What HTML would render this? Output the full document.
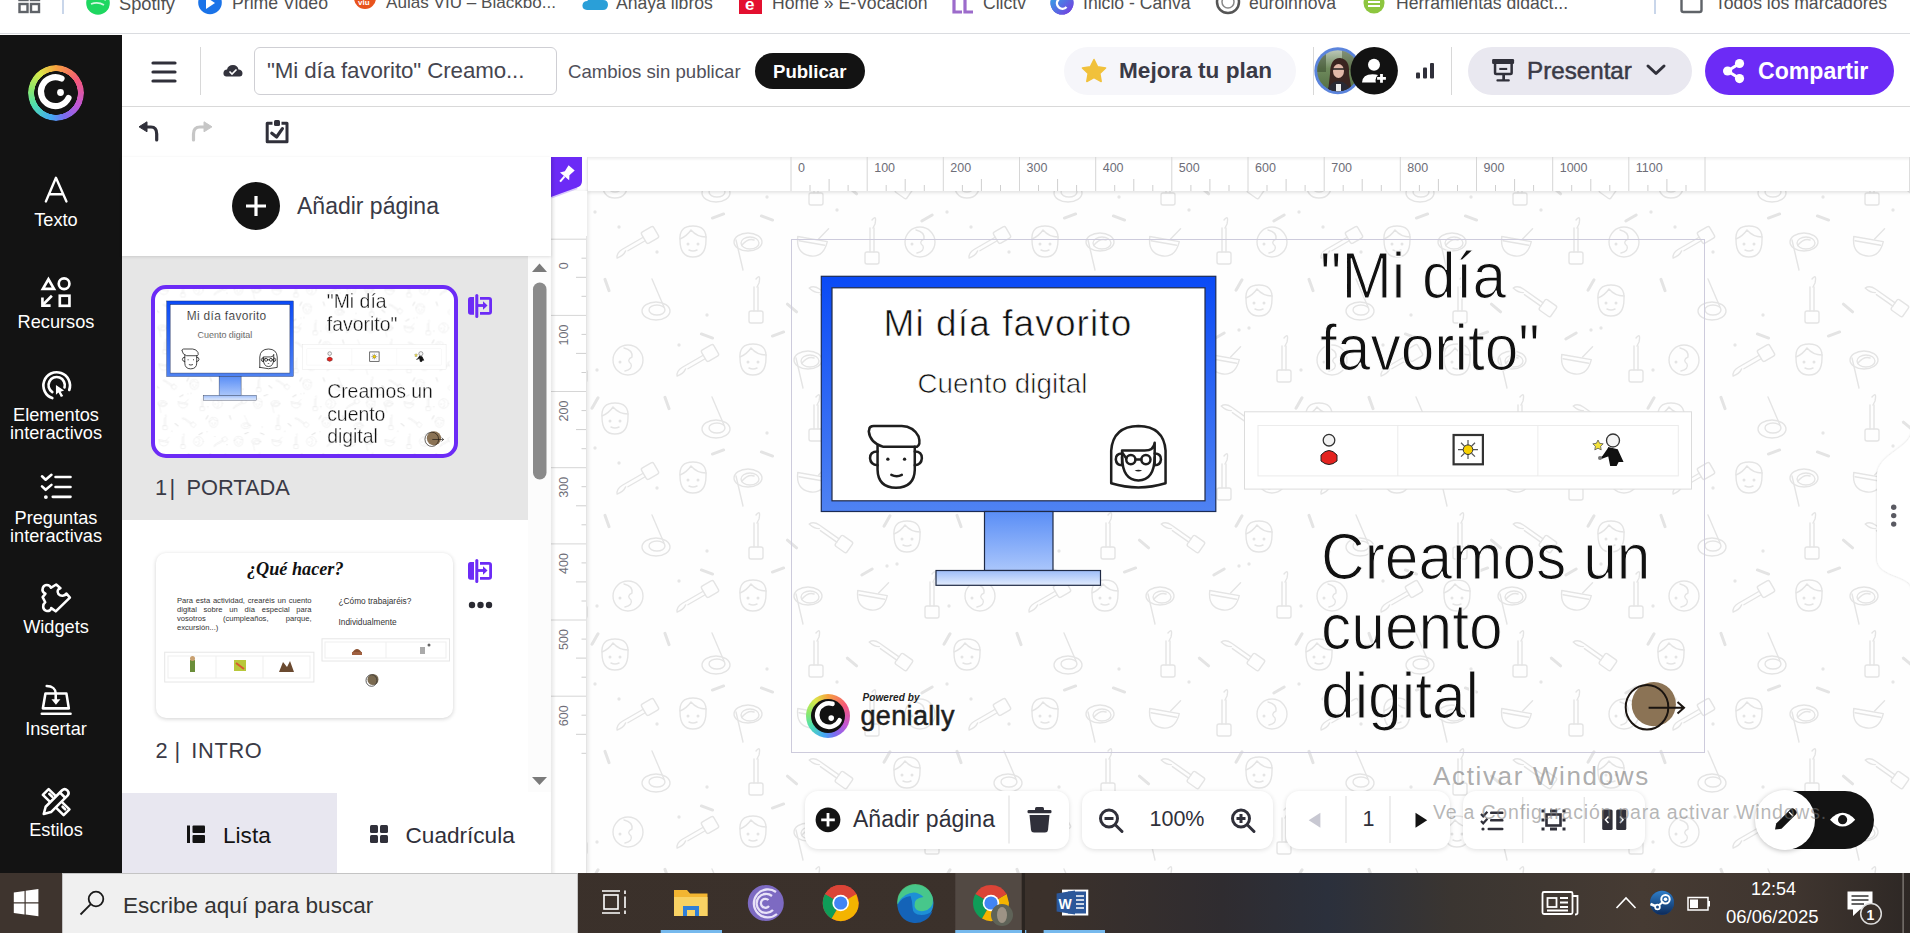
<!DOCTYPE html>
<html><head><meta charset="utf-8">
<style>
*{box-sizing:border-box;margin:0;padding:0}
html,body{width:1910px;height:933px;overflow:hidden;background:#fff;font-family:"Liberation Sans",sans-serif;color:#333}
.a{position:absolute}
#bm{left:0;top:0;width:1910px;height:34px;background:#fff;border-bottom:1px solid #dadce0;overflow:hidden}
#bm .t{position:absolute;top:-7px;font-size:17px;color:#505050;white-space:nowrap}
#side{left:0;top:35px;width:122px;height:838px;background:#131313}
#side .lbl{position:absolute;left:0;width:122px;text-align:center;color:#fff;font-size:17px;line-height:18px}
#hdr{left:122px;top:34px;width:1788px;height:73px;background:#fff;border-bottom:1px solid #d9d9d9}
#tb{left:122px;top:107px;width:1788px;height:50px;background:#fff}
#panel{left:122px;top:157px;width:429px;height:716px;background:#fff}
#canvas{left:551px;top:157px;width:1359px;height:716px;background:#fdfdfd}
#task{left:0;top:873px;width:1910px;height:60px}
</style></head><body>
<div id="bm" class="a">
<svg class="a" style="left:0;top:0" width="1910" height="34">
 <g fill="none" stroke="#5f6368" stroke-width="2.4">
  <rect x="19.5" y="-8" width="8" height="8"/><rect x="31" y="-8" width="8" height="8"/>
  <rect x="19.5" y="4" width="8" height="8"/><rect x="31" y="4" width="8" height="8"/>
 </g>
 <rect x="62" y="0" width="2" height="14" fill="#c9d6ea"/>
 <circle cx="98" cy="3" r="11.8" fill="#1ed760"/>
 <path d="M90 -1 q8 -3 16 1 M91 4 q7 -2.5 13 1" stroke="#fff" stroke-width="1.8" fill="none" opacity=".8"/>
 <circle cx="210" cy="2.5" r="11.8" fill="#1a73e8"/>
 <path d="M206 -3 L215 3 L206 9 Z" fill="#fff"/>
 <path d="M354 -2 a11 11 0 0 0 22 0 v-4 h-22 z" fill="#e8531d"/>
 <text x="358" y="5" font-size="8" font-weight="700" fill="#fff" font-family="Liberation Sans">viu</text>
 <path d="M587 10 q-5 0 -4.5 -5 q0.5 -4 5 -4 q1.5 -6 8 -6 q6 0 7.5 5 q5 0 5 5 q-0.5 5 -5 5 z" fill="#2a9fd8"/>
 <rect x="739" y="-8" width="23" height="22" fill="#e3102f"/>
 <text x="745" y="10" font-size="17" font-weight="700" fill="#fff" font-family="Liberation Sans">e</text>
 <path d="M954 -6 v18 h8 M965 -6 v18 h8" stroke="#9c6bcb" stroke-width="3.2" fill="none"/>
 <circle cx="1062" cy="3" r="11.5" fill="#5a4fd8"/>
 <circle cx="1062" cy="3" r="11.5" fill="url(#cv)"/>
 <path d="M1066 -1 a5.5 5.5 0 1 0 0.5 8" stroke="#fff" stroke-width="2.4" fill="none"/>
 <defs><linearGradient id="cv" x1="0" y1="0" x2="1" y2="1"><stop offset="0" stop-color="#28b4e6"/><stop offset="1" stop-color="#7b34e0"/></linearGradient></defs>
 <circle cx="1228" cy="2" r="11" fill="#fff" stroke="#555" stroke-width="2.5"/>
 <circle cx="1228" cy="2" r="6" fill="none" stroke="#888" stroke-width="1.5"/>
 <circle cx="1374" cy="3" r="10.5" fill="#8dc63f"/>
 <rect x="1368" y="1" width="12" height="2" fill="#fff"/><rect x="1368" y="5" width="12" height="2" fill="#fff"/>
 <rect x="1654" y="0" width="2" height="14" fill="#c9d6ea"/>
 <rect x="1681.5" y="-10" width="20" height="22" rx="2" fill="none" stroke="#5f6368" stroke-width="2.4"/>
</svg>
<span class="t" style="left:119px;font-size:18.3px">Spotify</span>
<span class="t" style="left:232px;font-size:17.7px">Prime Video</span>
<span class="t" style="left:386px;font-size:17.1px">Aulas VIU – Blackbo...</span>
<span class="t" style="left:616px;font-size:17.6px">Anaya libros</span>
<span class="t" style="left:772px;font-size:17.6px">Home » E-Vocación</span>
<span class="t" style="left:983px;font-size:17.6px">Clictv</span>
<span class="t" style="left:1083px;font-size:17.6px">Inicio - Canva</span>
<span class="t" style="left:1249px;font-size:17.6px">euroinnova</span>
<span class="t" style="left:1396px;font-size:17.6px">Herramientas didáct...</span>
<span class="t" style="left:1715px;font-size:17.6px">Todos los marcadores</span>
</div>
<div id="side" class="a"></div>
<svg class="a" style="left:0;top:0" width="122" height="873">
<g fill="none" stroke="#fff" stroke-linecap="round" stroke-linejoin="round">
 <g transform="translate(30,170) scale(0.04288)" stroke-width="55"><path d="M370 735 L605 180 L850 735 M455 565 L765 565"/></g>
 <g transform="translate(30,270) scale(0.04288)" stroke-width="62" stroke-linecap="butt" stroke-linejoin="miter">
  <path d="M430 215 L560 440 L300 440 Z"/><circle cx="795" cy="320" r="125"/><rect x="695" y="600" width="225" height="235"/>
  <path d="M510 600 L300 810"/><path d="M290 640 L290 830 L480 830"/></g>
 <g transform="translate(30,364) scale(0.04288)" stroke-width="62">
  <path d="M520 795 A310 310 0 1 1 915 605"/><path d="M520 655 A190 190 0 1 1 805 545"/></g>
 <g transform="translate(30,364) scale(0.04288)" fill="#fff" stroke="none"><path d="M605 490 L795 620 L715 645 L775 745 L720 770 L665 665 L605 715 Z"/></g>
 <g transform="translate(30,466) scale(0.04288)" stroke-width="60">
  <path d="M280 240 L365 320 L500 205 M280 475 L365 555 L500 440 M595 255 L945 255 M595 490 L945 490 M530 720 L945 720"/></g>
 <g transform="translate(30,466) scale(0.04288)" fill="#fff" stroke="none"><circle cx="370" cy="725" r="45"/></g>
 <g transform="translate(30,577) scale(0.04288)" stroke-width="60">
  <path d="M490 250 C455 170 330 165 300 250 C275 320 320 370 360 390 L295 470 L355 590 C290 640 285 760 380 790 C450 810 490 760 495 725 L600 800 L930 480 L850 385 C815 445 720 460 665 400 C620 340 650 275 710 260 L610 175 Z"/></g>
 <g transform="translate(30,679) scale(0.04288)" stroke-width="60">
  <path d="M360 340 L850 340 L905 685 L300 685 Z"/><path d="M275 810 L945 810"/><path d="M390 165 C520 165 600 240 600 340 L600 500"/></g>
 <g transform="translate(30,679) scale(0.04288)" fill="#fff" stroke="none"><path d="M500 470 L710 470 L605 600 Z"/></g>
 <g transform="translate(30,781) scale(0.04288)" stroke-width="60">
  <path d="M300 325 L435 190 L920 660 L785 795 Z"/>
  <path d="M450 300 L520 370 M760 600 L820 660"/>
 </g>
 <g transform="translate(30,781) scale(0.04288)" stroke-width="60" fill="#131313">
  <path d="M320 770 L365 600 L750 215 Q810 160 870 220 Q930 280 875 340 L490 725 Z"/>
  <path d="M700 270 L815 385"/>
 </g>
</g>
</svg>
<div class="a" style="left:0;top:212px;width:112px;text-align:center;color:#fff;font-size:18.2px;line-height:17.5px">Texto</div>
<div class="a" style="left:0;top:314px;width:112px;text-align:center;color:#fff;font-size:18.2px;line-height:17.5px">Recursos</div>
<div class="a" style="left:0;top:407px;width:112px;text-align:center;color:#fff;font-size:18.2px;line-height:17.5px">Elementos<br>interactivos</div>
<div class="a" style="left:0;top:510px;width:112px;text-align:center;color:#fff;font-size:18.2px;line-height:17.5px">Preguntas<br>interactivas</div>
<div class="a" style="left:0;top:619px;width:112px;text-align:center;color:#fff;font-size:18.2px;line-height:17.5px">Widgets</div>
<div class="a" style="left:0;top:721px;width:112px;text-align:center;color:#fff;font-size:18.2px;line-height:17.5px">Insertar</div>
<div class="a" style="left:0;top:822px;width:112px;text-align:center;color:#fff;font-size:18.2px;line-height:17.5px">Estilos</div>

<div id="hdr" class="a"></div>
<div class="a" style="left:28px;top:64.5px;width:56px;height:56px;border-radius:50%;background:conic-gradient(from 0deg,#f6a23e,#f4577a 60deg,#c057d8 120deg,#7a6cf0 160deg,#45a6f5 190deg,#4ee0b0 240deg,#8ee86a 280deg,#d9e84a 320deg,#f6a23e);-webkit-mask:radial-gradient(circle,transparent 21.5px,#000 22px,#000 28px,transparent 28.5px)"></div>
<svg class="a" style="left:28px;top:64.5px" width="56" height="56">
 <path d="M33.5 13.5 A14.5 14.5 0 1 0 40.5 33" fill="none" stroke="#fff" stroke-width="6.2" stroke-linecap="round"/>
 <circle cx="32.5" cy="27.5" r="3.4" fill="#fff"/>
</svg>


<div class="a" style="left:254px;top:47px;width:303px;height:48px;border:1px solid #cfcfd4;border-radius:6px"></div>
<div class="a" style="left:267px;top:58px;font-size:22.3px;color:#45454f;white-space:nowrap;letter-spacing:-0.1px">"Mi día favorito" Creamo...</div>
<div class="a" style="left:568px;top:61px;font-size:18.6px;color:#50505a;white-space:nowrap">Cambios sin publicar</div>
<div class="a" style="left:755px;top:53px;width:110px;height:36px;border-radius:18px;background:#131313"></div>
<div class="a" style="left:773px;top:61px;font-size:18.6px;font-weight:700;color:#fff;white-space:nowrap">Publicar</div>
<div class="a" style="left:1064px;top:47px;width:232px;height:48px;border-radius:24px;background:#f6f6fa"></div>
<div class="a" style="left:1119px;top:58px;font-size:22.6px;font-weight:700;color:#3a3a46;white-space:nowrap">Mejora tu plan</div>
<div class="a" style="left:1468px;top:47px;width:224px;height:48px;border-radius:24px;background:#e9e8f0"></div>
<div class="a" style="left:1527px;top:57px;font-size:24.2px;color:#3a3a46;white-space:nowrap;-webkit-text-stroke:0.5px #3a3a46">Presentar</div>
<div class="a" style="left:1705px;top:47px;width:189px;height:48px;border-radius:24px;background:#6c2bf6"></div>
<div class="a" style="left:1758px;top:58px;font-size:23.1px;font-weight:700;color:#fff;white-space:nowrap">Compartir</div>
<svg class="a" style="left:0;top:34px" width="1910" height="73">
 <!-- hamburger -->
 <g stroke="#30303a" stroke-width="3.2" stroke-linecap="round"><path d="M153 29h22M153 38h22M153 47h22"/></g>
 <rect x="200" y="13" width="1" height="48" fill="#d8d8d8"/>
 <!-- cloud -->
 <path d="M226 42.5 q-3 -0.5 -2.5 -4 q0.5 -3 3.5 -3 q1 -4.5 6 -4.5 q4.5 0 5.5 4.5 q3.5 0 4 3.5 q0 3.5 -3 3.5 z" fill="#33333d"/>
 <path d="M229.5 37.5 l2.5 2.5 l4.5 -4.5" stroke="#fff" stroke-width="1.6" fill="none"/>
 <!-- star -->
 <path d="M1094 25.5 l3.6 7.3 8 1.1 -5.8 5.6 1.4 8 -7.2 -3.8 -7.2 3.8 1.4 -8 -5.8 -5.6 8 -1.1z" fill="#f1c13b" stroke="#f1c13b" stroke-width="1.5" stroke-linejoin="round"/>
 <rect x="1313" y="13" width="1" height="48" fill="#d8d8d8"/>
 <rect x="1451" y="13" width="1" height="48" fill="#d8d8d8"/>
 <!-- avatar -->
 <defs><clipPath id="av"><circle cx="1337.8" cy="36.75" r="20.6"/></clipPath>
 <linearGradient id="avg" x1="0" y1="0" x2="0" y2="1"><stop offset="0" stop-color="#c9d2c8"/><stop offset=".45" stop-color="#6f8a5c"/><stop offset="1" stop-color="#4e6a40"/></linearGradient></defs>
 <circle cx="1337.8" cy="36.75" r="23.5" fill="#5b84dc"/>
 <g clip-path="url(#av)">
  <rect x="1314" y="13" width="48" height="48" fill="url(#avg)"/>
  <rect x="1316" y="16" width="10" height="22" fill="#3b4a30" opacity=".55"/>
  <rect x="1342" y="16" width="14" height="20" fill="#4a5a3a" opacity=".5"/>
  <path d="M1330 40 Q1330 24 1340 24 Q1350 25 1349 40 L1352 58 H1328 Z" fill="#3a2420"/>
  <ellipse cx="1338.5" cy="37" rx="5.5" ry="7" fill="#e2b8a8"/>
  <path d="M1333 35 H1344" stroke="#222" stroke-width="1.3"/>
  <path d="M1326 62 Q1328 48 1338 47 Q1350 48 1352 62 Z" fill="#2a2a34"/>
  <rect x="1336" y="50" width="5" height="12" fill="#eee"/>
 </g>
 <circle cx="1374.2" cy="36.75" r="23.7" fill="#121212"/>
 <circle cx="1374" cy="30.8" r="6" fill="#fff"/>
 <path d="M1362 48.5 Q1362.5 40.2 1372.5 40.2 Q1376 40.2 1378 41 Q1375.5 43.2 1375.5 46 Q1375.5 47.5 1376 48.5 Z" fill="#fff"/>
 <path d="M1381.5 40 V48.8 M1377.1 44.4 H1385.9" stroke="#fff" stroke-width="2.8"/>
 <!-- signal -->
 <rect x="1416" y="38.5" width="4" height="6" rx="1" fill="#30303a"/>
 <rect x="1423" y="33.5" width="4" height="11" rx="1" fill="#30303a"/>
 <rect x="1430" y="29" width="4" height="15.5" rx="1" fill="#30303a"/>
 <!-- presentar icon -->
 <g fill="#30303a"><rect x="1492.1" y="25.1" width="22" height="4.9" rx="1.2"/><path d="M1493.8 29.5 H1512.9 V38.7 Q1512.9 41.2 1510.4 41.2 H1496.3 Q1493.8 41.2 1493.8 38.7 Z M1496.3 29.5 V38.7 H1510.4 V29.5 Z" fill-rule="evenodd"/><rect x="1499.3" y="33.9" width="7.9" height="2.1"/><rect x="1502.3" y="41" width="2.7" height="5"/><rect x="1496.4" y="45.3" width="13.4" height="2.2" rx="1"/></g>
 <path d="M1648 32 l8 7.5 l8 -7.5" stroke="#30303a" stroke-width="3" fill="none" stroke-linecap="round" stroke-linejoin="round"/>
 <!-- share -->
 <g fill="#fff"><circle cx="1739.5" cy="29.5" r="4.6"/><circle cx="1727.6" cy="37" r="4.6"/><circle cx="1739.5" cy="44.6" r="4.6"/></g>
 <path d="M1739.5 29.5 L1727.6 37 L1739.5 44.6" stroke="#fff" stroke-width="3" fill="none"/>
</svg>

<div id="tb" class="a"></div>
<svg class="a" style="left:122px;top:107px" width="200" height="50">
 <g transform="translate(-122,-107)">
 <path d="M146 127 L151 127 Q156.7 127 156.7 134 L156.7 140" stroke="#30303a" stroke-width="3.2" fill="none" stroke-linecap="round"/>
 <path d="M139 126.8 L147 121.8 L147 131.8 Z" fill="#30303a" stroke="#30303a" stroke-width="1" stroke-linejoin="round"/>
 <path d="M205 127 L200 127 Q193.5 127 193.5 134 L193.5 140" stroke="#c6c6c6" stroke-width="3.2" fill="none" stroke-linecap="round"/>
 <path d="M212 126.8 L204 121.8 L204 131.8 Z" fill="#c6c6c6" stroke="#c6c6c6" stroke-width="1" stroke-linejoin="round"/>
 <path d="M272.5 123.2 L267.2 123.2 L267.2 141.8 L287 141.8 L287 123.2 L281.5 123.2" stroke="#30303a" stroke-width="3" fill="none" stroke-linejoin="round"/>
 <rect x="274" y="120" width="6" height="6" rx="1.5" fill="#30303a"/>
 <path d="M271.8 133.3 L276.6 137 L282.4 128.6" stroke="#30303a" stroke-width="3.2" fill="none" stroke-linecap="round" stroke-linejoin="round"/>
 </g>
</svg>

<div id="panel" class="a">
 <div class="a" style="left:0;top:0;width:429px;height:99px;background:#fff;box-shadow:0 1px 3px rgba(0,0,0,.12);z-index:2"></div>
 <div class="a" style="left:110px;top:25px;width:48px;height:48px;border-radius:50%;background:#131313;z-index:3"></div>
 <svg class="a" style="left:110px;top:25px;z-index:3" width="48" height="48"><path d="M24 14 V34 M14 24 H34" stroke="#fff" stroke-width="3.2"/></svg>
 <div class="a" style="left:175px;top:36px;font-size:23px;color:#3a3a46;white-space:nowrap;z-index:3">Añadir página</div>
 <div class="a" style="left:0;top:99px;width:406px;height:264px;background:#e6e6e6"></div>
 <div class="a" style="left:406px;top:99px;width:23px;height:536px;background:#fcfcfc"></div>
 <svg class="a" style="left:406px;top:99px" width="23" height="536">
  <path d="M4 16 L11.5 7.5 L19 16 Z" fill="#7a7a7a"/>
  <rect x="5" y="26.5" width="13.5" height="197" rx="6.75" fill="#8a8a8a"/>
  <path d="M4 521 L11.5 529 L19 521 Z" fill="#7a7a7a"/>
 </svg>
 <div class="a" style="left:28.5px;top:127.8px;width:307.5px;height:173px;border:4px solid #6c2bf6;border-radius:15px;background:#fff;overflow:hidden"><div class="a" style="left:2.9px;top:0;width:914px;height:514px;transform:scale(0.321);transform-origin:0 0"><svg class="a" style="left:0;top:0" width="914" height="514"><defs><pattern id="ddt" patternUnits="userSpaceOnUse" x="-204" y="-79" width="352" height="236"><g fill="none" stroke="#e4e4e4" stroke-width="1.4" stroke-linecap="round" stroke-linejoin="round"><g transform="translate(52 82) rotate(-30) scale(1)"><rect x="6" y="-7" width="14" height="13" rx="2"/><path d="M6 -2 H-18 Q-25 -2 -27 3 Q-20 4 -16 1"/><path d="M6 2 H-14"/></g>
<g transform="translate(106 82) scale(1)"><path d="M-13 -2 Q-14 -16 0 -16 Q14 -16 13 -2 Q13 15 0 15 Q-13 15 -13 -2 Z"/><path d="M-13 -3 Q-6 -6 -2 -12 Q4 -5 13 -5"/><circle cx="-5" cy="2" r="0.8"/><circle cx="5" cy="2" r="0.8"/><path d="M-4 8 Q0 10 4 8"/></g>
<g transform="translate(161 82) scale(1)"><ellipse rx="14" ry="9"/><ellipse cx="2" cy="1" rx="9" ry="6"/><path d="M-6 3 Q0 -4 6 -2"/><path d="M-12 -2 L-5 28"/></g>
<g transform="translate(225 82) rotate(10) scale(1)"><path d="M-15 -3 H15 Q14 14 0 14 Q-14 14 -15 -3 Z"/><path d="M-13 1 H13"/><path d="M6 -4 L14 -16"/></g>
<g transform="translate(285 82) rotate(0) scale(1)"><path d="M0 -22 Q5 -28 3 -18 L1 -14"/><path d="M-2 -14 L-2 10 M2 -14 L2 10"/><rect x="-7" y="10" width="14" height="12" rx="2"/></g>
<g transform="translate(-19 82) scale(1)"><circle r="15"/><path d="M-4 -12 Q5 -10 4 -3 Q-2 0 3 4 Q5 9 -3 11"/><circle cx="-8" cy="2" r="0.8"/></g>
<g transform="translate(333 82) scale(1)"><circle r="15"/><path d="M-4 -12 Q5 -10 4 -3 Q-2 0 3 4 Q5 9 -3 11"/><circle cx="-8" cy="2" r="0.8"/></g>
<g transform="translate(69 141) scale(1)"><ellipse cx="0" cy="10" rx="14" ry="9"/><ellipse cx="1" cy="9" rx="8" ry="5"/><path d="M8 6 L-4 -22"/></g>
<g transform="translate(169 141) rotate(0) scale(1)"><path d="M0 -22 Q5 -28 3 -18 L1 -14"/><path d="M-2 -14 L-2 10 M2 -14 L2 10"/><rect x="-7" y="10" width="14" height="12" rx="2"/></g>
<g transform="translate(246 141) rotate(35) scale(1)"><rect x="6" y="-7" width="14" height="13" rx="2"/><path d="M6 -2 H-18 Q-25 -2 -27 3 Q-20 4 -16 1"/><path d="M6 2 H-14"/></g>
<g transform="translate(-32 141) scale(1)"><path d="M-13 -2 Q-14 -16 0 -16 Q14 -16 13 -2 Q13 15 0 15 Q-13 15 -13 -2 Z"/><path d="M-13 -3 Q-6 -6 -2 -12 Q4 -5 13 -5"/><circle cx="-5" cy="2" r="0.8"/><circle cx="5" cy="2" r="0.8"/><path d="M-4 8 Q0 10 4 8"/></g>
<g transform="translate(320 141) scale(1)"><path d="M-13 -2 Q-14 -16 0 -16 Q14 -16 13 -2 Q13 15 0 15 Q-13 15 -13 -2 Z"/><path d="M-13 -3 Q-6 -6 -2 -12 Q4 -5 13 -5"/><circle cx="-5" cy="2" r="0.8"/><circle cx="5" cy="2" r="0.8"/><path d="M-4 8 Q0 10 4 8"/></g>
<path transform="translate(131 56) rotate(-20)" d="M-6 0 H6" stroke-width="3" stroke-linecap="round"/>
<path transform="translate(20 125) rotate(70)" d="M-6 0 H6" stroke-width="3" stroke-linecap="round"/>
<path transform="translate(372 125) rotate(70)" d="M-6 0 H6" stroke-width="3" stroke-linecap="round"/>
<path transform="translate(300 125) rotate(-60)" d="M-6 0 H6" stroke-width="3" stroke-linecap="round"/>
<path transform="translate(205 148) rotate(40)" d="M-6 0 H6" stroke-width="3" stroke-linecap="round"/>
<path transform="translate(120 176) rotate(20)" d="M-6 0 H6" stroke-width="3" stroke-linecap="round"/>
<path transform="translate(280 176) rotate(-30)" d="M-6 0 H6" stroke-width="3" stroke-linecap="round"/>
<circle cx="32" cy="67" r="1.7" fill="#e6e6e6" stroke="none"/>
<circle cx="384" cy="67" r="1.7" fill="#e6e6e6" stroke="none"/>
<circle cx="250" cy="50" r="1.7" fill="#e6e6e6" stroke="none"/>
<circle cx="120" cy="155" r="1.7" fill="#e6e6e6" stroke="none"/>
<circle cx="300" cy="170" r="1.7" fill="#e6e6e6" stroke="none"/>
<circle cx="10" cy="-26" r="1.7" fill="#e6e6e6" stroke="none"/>
<circle cx="10" cy="210" r="1.7" fill="#e6e6e6" stroke="none"/>
<circle cx="362" cy="-26" r="1.7" fill="#e6e6e6" stroke="none"/>
<circle cx="362" cy="210" r="1.7" fill="#e6e6e6" stroke="none"/>
<g transform="translate(112 200) rotate(-30) scale(1)"><rect x="6" y="-7" width="14" height="13" rx="2"/><path d="M6 -2 H-18 Q-25 -2 -27 3 Q-20 4 -16 1"/><path d="M6 2 H-14"/></g>
<g transform="translate(166 200) scale(1)"><path d="M-13 -2 Q-14 -16 0 -16 Q14 -16 13 -2 Q13 15 0 15 Q-13 15 -13 -2 Z"/><path d="M-13 -3 Q-6 -6 -2 -12 Q4 -5 13 -5"/><circle cx="-5" cy="2" r="0.8"/><circle cx="5" cy="2" r="0.8"/><path d="M-4 8 Q0 10 4 8"/></g>
<g transform="translate(221 200) scale(1)"><ellipse rx="14" ry="9"/><ellipse cx="2" cy="1" rx="9" ry="6"/><path d="M-6 3 Q0 -4 6 -2"/><path d="M-12 -2 L-5 28"/></g>
<g transform="translate(285 200) rotate(10) scale(1)"><path d="M-15 -3 H15 Q14 14 0 14 Q-14 14 -15 -3 Z"/><path d="M-13 1 H13"/><path d="M6 -4 L14 -16"/></g>
<g transform="translate(-7 200) rotate(0) scale(1)"><path d="M0 -22 Q5 -28 3 -18 L1 -14"/><path d="M-2 -14 L-2 10 M2 -14 L2 10"/><rect x="-7" y="10" width="14" height="12" rx="2"/></g>
<g transform="translate(345 200) rotate(0) scale(1)"><path d="M0 -22 Q5 -28 3 -18 L1 -14"/><path d="M-2 -14 L-2 10 M2 -14 L2 10"/><rect x="-7" y="10" width="14" height="12" rx="2"/></g>
<g transform="translate(41 200) scale(1)"><circle r="15"/><path d="M-4 -12 Q5 -10 4 -3 Q-2 0 3 4 Q5 9 -3 11"/><circle cx="-8" cy="2" r="0.8"/></g>
<g transform="translate(129 23) scale(1)"><ellipse cx="0" cy="10" rx="14" ry="9"/><ellipse cx="1" cy="9" rx="8" ry="5"/><path d="M8 6 L-4 -22"/></g>
<g transform="translate(129 259) scale(1)"><ellipse cx="0" cy="10" rx="14" ry="9"/><ellipse cx="1" cy="9" rx="8" ry="5"/><path d="M8 6 L-4 -22"/></g>
<g transform="translate(229 23) rotate(0) scale(1)"><path d="M0 -22 Q5 -28 3 -18 L1 -14"/><path d="M-2 -14 L-2 10 M2 -14 L2 10"/><rect x="-7" y="10" width="14" height="12" rx="2"/></g>
<g transform="translate(229 259) rotate(0) scale(1)"><path d="M0 -22 Q5 -28 3 -18 L1 -14"/><path d="M-2 -14 L-2 10 M2 -14 L2 10"/><rect x="-7" y="10" width="14" height="12" rx="2"/></g>
<g transform="translate(306 23) rotate(35) scale(1)"><rect x="6" y="-7" width="14" height="13" rx="2"/><path d="M6 -2 H-18 Q-25 -2 -27 3 Q-20 4 -16 1"/><path d="M6 2 H-14"/></g>
<g transform="translate(306 259) rotate(35) scale(1)"><rect x="6" y="-7" width="14" height="13" rx="2"/><path d="M6 -2 H-18 Q-25 -2 -27 3 Q-20 4 -16 1"/><path d="M6 2 H-14"/></g>
<g transform="translate(28 23) scale(1)"><path d="M-13 -2 Q-14 -16 0 -16 Q14 -16 13 -2 Q13 15 0 15 Q-13 15 -13 -2 Z"/><path d="M-13 -3 Q-6 -6 -2 -12 Q4 -5 13 -5"/><circle cx="-5" cy="2" r="0.8"/><circle cx="5" cy="2" r="0.8"/><path d="M-4 8 Q0 10 4 8"/></g>
<g transform="translate(28 259) scale(1)"><path d="M-13 -2 Q-14 -16 0 -16 Q14 -16 13 -2 Q13 15 0 15 Q-13 15 -13 -2 Z"/><path d="M-13 -3 Q-6 -6 -2 -12 Q4 -5 13 -5"/><circle cx="-5" cy="2" r="0.8"/><circle cx="5" cy="2" r="0.8"/><path d="M-4 8 Q0 10 4 8"/></g>
<g transform="translate(380 23) scale(1)"><path d="M-13 -2 Q-14 -16 0 -16 Q14 -16 13 -2 Q13 15 0 15 Q-13 15 -13 -2 Z"/><path d="M-13 -3 Q-6 -6 -2 -12 Q4 -5 13 -5"/><circle cx="-5" cy="2" r="0.8"/><circle cx="5" cy="2" r="0.8"/><path d="M-4 8 Q0 10 4 8"/></g>
<g transform="translate(380 259) scale(1)"><path d="M-13 -2 Q-14 -16 0 -16 Q14 -16 13 -2 Q13 15 0 15 Q-13 15 -13 -2 Z"/><path d="M-13 -3 Q-6 -6 -2 -12 Q4 -5 13 -5"/><circle cx="-5" cy="2" r="0.8"/><circle cx="5" cy="2" r="0.8"/><path d="M-4 8 Q0 10 4 8"/></g>
<path transform="translate(191 174) rotate(-20)" d="M-6 0 H6" stroke-width="3" stroke-linecap="round"/>
<path transform="translate(80 7) rotate(70)" d="M-6 0 H6" stroke-width="3" stroke-linecap="round"/>
<path transform="translate(80 243) rotate(70)" d="M-6 0 H6" stroke-width="3" stroke-linecap="round"/>
<path transform="translate(8 7) rotate(-60)" d="M-6 0 H6" stroke-width="3" stroke-linecap="round"/>
<path transform="translate(8 243) rotate(-60)" d="M-6 0 H6" stroke-width="3" stroke-linecap="round"/>
<path transform="translate(360 7) rotate(-60)" d="M-6 0 H6" stroke-width="3" stroke-linecap="round"/>
<path transform="translate(360 243) rotate(-60)" d="M-6 0 H6" stroke-width="3" stroke-linecap="round"/>
<path transform="translate(265 30) rotate(40)" d="M-6 0 H6" stroke-width="3" stroke-linecap="round"/>
<path transform="translate(265 266) rotate(40)" d="M-6 0 H6" stroke-width="3" stroke-linecap="round"/>
<path transform="translate(180 58) rotate(20)" d="M-6 0 H6" stroke-width="3" stroke-linecap="round"/>
<path transform="translate(-12 58) rotate(-30)" d="M-6 0 H6" stroke-width="3" stroke-linecap="round"/>
<path transform="translate(340 58) rotate(-30)" d="M-6 0 H6" stroke-width="3" stroke-linecap="round"/>
<circle cx="92" cy="185" r="1.7" fill="#e6e6e6" stroke="none"/>
<circle cx="310" cy="168" r="1.7" fill="#e6e6e6" stroke="none"/>
<circle cx="180" cy="37" r="1.7" fill="#e6e6e6" stroke="none"/>
<circle cx="8" cy="52" r="1.7" fill="#e6e6e6" stroke="none"/>
<circle cx="360" cy="52" r="1.7" fill="#e6e6e6" stroke="none"/>
<circle cx="70" cy="92" r="1.7" fill="#e6e6e6" stroke="none"/></g></pattern></defs><rect width="914" height="514" fill="url(#ddt)"/></svg>
 <svg class="a" style="left:0;top:0" width="914" height="514">
  <defs>
   <linearGradient id="mft" x1="0" y1="0" x2="0" y2="1"><stop offset="0" stop-color="#0a4af6"/><stop offset="1" stop-color="#4f82f2"/></linearGradient>
   <linearGradient id="mnt" x1="0" y1="0" x2="0" y2="1"><stop offset="0" stop-color="#5a8ef6"/><stop offset="1" stop-color="#aac6fb"/></linearGradient>
   <linearGradient id="mbt" x1="0" y1="0" x2="0" y2="1"><stop offset="0" stop-color="#9dbcf8"/><stop offset="1" stop-color="#e2ecfd"/></linearGradient>
  </defs>
  <rect x="30.3" y="37.3" width="394.5" height="235.2" fill="url(#mft)" stroke="#1b2b55" stroke-width="1.2"/>
  <rect x="41" y="48.8" width="373" height="213" fill="#fff" stroke="#222a44" stroke-width="1.2"/>
  <rect x="193.5" y="272.5" width="68.5" height="59" fill="url(#mnt)" stroke="#1f2a45" stroke-width="1.2"/>
  <rect x="145" y="331.5" width="164.5" height="14.8" fill="url(#mbt)" stroke="#1f2a45" stroke-width="1.2"/>
  <g transform="translate(69,179) scale(0.08363)" fill="none" stroke="#1e1e1e" stroke-width="30" stroke-linecap="round" stroke-linejoin="round">
   <path d="M110 140 Q110 95 165 95 L500 95 Q640 100 700 220 Q730 320 680 345 L280 345 Q120 300 105 160 Z"/>
   <path d="M210 330 L210 620 Q215 830 430 835 Q650 830 655 620 L655 345"/>
   <path d="M210 400 Q120 400 120 480 Q125 560 210 565 M655 400 Q740 400 740 480 Q735 560 655 565"/>
   <path d="M375 680 Q440 712 500 680"/>
  </g>
  <g transform="translate(69,179) scale(0.08363)" fill="#1e1e1e"><circle cx="333" cy="492" r="20"/><circle cx="533" cy="492" r="20"/></g>
  <g transform="translate(311,179) scale(0.08363)" fill="none" stroke="#1e1e1e" stroke-width="30" stroke-linecap="round" stroke-linejoin="round">
   <path d="M110 780 L110 390 Q130 100 435 95 Q740 100 760 390 L760 780 Q435 880 110 780 Z"/>
   <path d="M240 560 L240 390 L510 390 Q620 390 630 295 L630 560"/>
   <path d="M240 470 Q245 745 435 748 Q625 745 630 470"/>
   <path d="M240 425 Q165 425 165 495 Q170 565 240 565 M630 425 Q705 425 705 495 Q700 565 630 565"/>
   <circle cx="345" cy="497" r="55"/><circle cx="525" cy="497" r="55"/><path d="M400 497 L470 497 M290 480 L245 420"/>
  </g>
  <g transform="translate(311,179) scale(0.08363)" fill="#1e1e1e"><path d="M390 625 Q435 655 480 625 Q435 612 390 625 Z"/></g>
  <rect x="453.5" y="172.8" width="447" height="77.3" fill="#fff" stroke="#dcdcdc" stroke-width="1"/>
  <rect x="467" y="186.5" width="420.3" height="50.4" fill="#fff" stroke="#ececec" stroke-width="1"/>
  <path d="M606.8 186.5 V237 M746.9 186.5 V237" stroke="#ececec" stroke-width="1"/>
  <circle cx="538" cy="201.2" r="5.8" fill="#f2f2f2" stroke="#333" stroke-width="1.3"/>
  <path d="M530 216 Q538 207 546 216 L546 222 Q538 229 530 222 Z" fill="#e4231f" stroke="#222" stroke-width="1"/>
  <rect x="662.6" y="196" width="29.3" height="29.3" fill="#fff" stroke="#333" stroke-width="2.2"/>
  <g stroke="#555" stroke-width="1.2"><path d="M677 201 V206 M677 215 V220 M667 210.7 H672 M682 210.7 H687 M670 203.8 L673.5 207.2 M680.5 214.2 L684 217.6 M684 203.8 L680.5 207.2 M673.5 214.2 L670 217.6"/></g>
  <circle cx="677" cy="210.7" r="4.8" fill="#f7d000" stroke="#333" stroke-width="1"/>
  <circle cx="822" cy="201.5" r="6.5" fill="#f4f4f4" stroke="#333" stroke-width="1.3"/>
  <path d="M807 201 l1.6 3.3 3.6 0.5 -2.6 2.5 0.6 3.6 -3.2 -1.7 -3.2 1.7 0.6 -3.6 -2.6 -2.5 3.6 -0.5z" fill="#f3e23a" stroke="#555" stroke-width="0.8"/>
  <path d="M817 209 L826 211 L831 222 L827 222 L825 226 L820 226 L818 216 L810 219" fill="#111" stroke="#111" stroke-width="2"/>
  <circle cx="809" cy="219" r="2" fill="#777"/>
  <circle cx="862.8" cy="465.2" r="22.1" fill="#8b7355"/>
  <ellipse cx="856" cy="468.2" rx="21.3" ry="22.3" fill="none" stroke="#1a1410" stroke-width="2"/>
  <path d="M857.6 468.8 H892.5 M886.5 463 L893 468.8 L886.5 474.5" fill="none" stroke="#1a1410" stroke-width="2"/>
 </svg>
 <div class="a" style="left:92.5px;top:60px;font-size:37px;letter-spacing:1.1px;color:#111;white-space:nowrap;line-height:50px;-webkit-text-stroke:0.6px #fff">Mi día favorito</div>
 <div class="a" style="left:126.5px;top:128px;font-size:27.8px;color:#111;white-space:nowrap;line-height:34px;-webkit-text-stroke:0.7px #fff">Cuento digital</div>
 <div class="a" style="left:529px;top:1.4px;font-size:64px;color:#111;white-space:nowrap;line-height:72px;-webkit-text-stroke:1.2px #fdfdfd;transform:scaleX(0.945);transform-origin:0 0">"Mi día<br>favorito"</div>
 <div class="a" style="left:529.5px;top:284.2px;font-size:64px;color:#111;white-space:nowrap;line-height:69.6px;-webkit-text-stroke:1.2px #fdfdfd;transform:scaleX(0.945);transform-origin:0 0">Creamos un<br>cuento<br>digital</div>
</div></div>
 <svg class="a" style="left:346px;top:137px" width="24" height="24"><g fill="#6c2bf6"><path d="M2.5 2.9 H6 V20.8 H2.5 Q0 20.8 0 18 V5.7 Q0 2.9 2.5 2.9 Z"/><rect x="7.3" y="0" width="3" height="24" rx="1.5"/><path d="M12 2.9 H21 Q24 2.9 24 5.9 V17.8 Q24 20.8 21 20.8 H12 V18 H21.2 V5.7 H12 Z"/><rect x="10" y="10.1" width="6" height="2.8"/><path d="M15 7.3 L19.5 11.5 L15 15.7 Z"/></g></svg>
 <div class="a" style="left:0;top:317.5px;width:300px;height:26px;font-size:21.8px;line-height:26px;color:#3a3a46;white-space:nowrap"><span class="a" style="left:33px">1</span><span class="a" style="left:47.5px">|</span><span class="a" style="left:64.5px">PORTADA</span></div>
 <div class="a" style="left:34px;top:395.8px;width:297px;height:165px;border-radius:10px;background:#fff;box-shadow:0 1px 4px rgba(0,0,0,.18);overflow:hidden"><svg class="a" style="left:0;top:0" width="297" height="165">
 <g fill="none" stroke="#e6e6e6" stroke-width="1"><rect x="8.7" y="99.2" width="149.2" height="29.8"/><rect x="166" y="85.8" width="127.5" height="22.2"/></g>
 <g fill="none" stroke="#efefef" stroke-width="1"><rect x="12" y="103" width="142" height="22"/><path d="M60 103 V125 M107 103 V125"/><rect x="169" y="89" width="121" height="16"/><path d="M230 89 V105"/></g>
 <g><rect x="34" y="107" width="5" height="12" fill="#6b8e3a"/><circle cx="36.5" cy="105.5" r="2.5" fill="#c8a070"/>
 <rect x="78" y="107" width="12" height="11" fill="#b8c83a"/><path d="M80 110 l8 6" stroke="#d85a30" stroke-width="2"/>
 <path d="M123 119 l4 -10 l4 5 l3 -6 l4 11 z" fill="#6b4a30"/>
 <path d="M196 100 q5 -8 10 0 z" fill="#8a5030"/><rect x="196" y="99" width="10" height="3" fill="#a06040"/>
 <rect x="264" y="94" width="5" height="7" fill="#aaa"/><circle cx="273" cy="92" r="1.5" fill="#666"/>
 <circle cx="217" cy="126.5" r="5.5" fill="#7a6a50"/><ellipse cx="215.5" cy="127.5" rx="5.5" ry="5.8" fill="none" stroke="#333" stroke-width=".8"/></g>
</svg>
<div class="a" style="left:91px;top:6px;font-family:'Liberation Serif',serif;font-style:italic;font-weight:700;font-size:18.2px;color:#111;white-space:nowrap">¿Qué hacer?</div>
<div class="a" style="left:21px;top:43px;width:134.5px;font-size:7.6px;line-height:9.1px;color:#333;text-align:justify">Para esta actividad, crearéis un cuento digital sobre un día especial para vosotros (cumpleaños, parque, excursión...)</div>
<div class="a" style="left:182.5px;top:43px;font-size:8.3px;color:#333;white-space:nowrap">¿Cómo trabajaréis?</div>
<div class="a" style="left:182.5px;top:64px;font-size:8.3px;color:#333;white-space:nowrap">Individualmente</div>
</div>
 <svg class="a" style="left:346px;top:402px" width="24" height="24"><g fill="#6c2bf6"><path d="M2.5 2.9 H6 V20.8 H2.5 Q0 20.8 0 18 V5.7 Q0 2.9 2.5 2.9 Z"/><rect x="7.3" y="0" width="3" height="24" rx="1.5"/><path d="M12 2.9 H21 Q24 2.9 24 5.9 V17.8 Q24 20.8 21 20.8 H12 V18 H21.2 V5.7 H12 Z"/><rect x="10" y="10.1" width="6" height="2.8"/><path d="M15 7.3 L19.5 11.5 L15 15.7 Z"/></g></svg>
 <svg class="a" style="left:346px;top:444px" width="26" height="8"><g fill="#2a2a32"><circle cx="4" cy="4" r="3.2"/><circle cx="12.5" cy="4" r="3.2"/><circle cx="21" cy="4" r="3.2"/></g></svg>
 <div class="a" style="left:0;top:581.4px;width:300px;height:26px;font-size:21.8px;line-height:26px;color:#3a3a46;white-space:nowrap"><span class="a" style="left:33.4px">2</span><span class="a" style="left:52.5px">|</span><span class="a" style="left:69.2px;letter-spacing:0.7px">INTRO</span></div>
 <div class="a" style="left:0;top:635.5px;width:215px;height:80.5px;background:#e8e7f0"></div>
 <div class="a" style="left:215px;top:635.5px;width:214px;height:80.5px;background:#fff"></div>
 <svg class="a" style="left:65px;top:668px" width="20" height="19"><g fill="#131313"><rect x="0" y="0.5" width="3" height="17.5"/><rect x="5.5" y="0.5" width="12.5" height="7.5" rx="1"/><rect x="5.5" y="10" width="12.5" height="8" rx="1"/></g></svg>
 <div class="a" style="left:101px;top:666px;font-size:22.6px;color:#131313;white-space:nowrap">Lista</div>
 <svg class="a" style="left:248px;top:668px" width="19" height="19"><g fill="#30303a"><rect x="0" y="0" width="8" height="8" rx="1.5"/><rect x="10" y="0" width="8" height="8" rx="1.5"/><rect x="0" y="10" width="8" height="8" rx="1.5"/><rect x="10" y="10" width="8" height="8" rx="1.5"/></g></svg>
 <div class="a" style="left:283.5px;top:666px;font-size:22.6px;color:#30303a;white-space:nowrap">Cuadrícula</div>
</div>
<div id="canvas" class="a"></div>
<svg class="a" style="left:551px;top:157px" width="1359" height="716"><defs><pattern id="dd" patternUnits="userSpaceOnUse" x="36" y="3" width="352" height="236"><g fill="none" stroke="#e4e4e4" stroke-width="1.4" stroke-linecap="round" stroke-linejoin="round"><g transform="translate(52 82) rotate(-30) scale(1)"><rect x="6" y="-7" width="14" height="13" rx="2"/><path d="M6 -2 H-18 Q-25 -2 -27 3 Q-20 4 -16 1"/><path d="M6 2 H-14"/></g>
<g transform="translate(106 82) scale(1)"><path d="M-13 -2 Q-14 -16 0 -16 Q14 -16 13 -2 Q13 15 0 15 Q-13 15 -13 -2 Z"/><path d="M-13 -3 Q-6 -6 -2 -12 Q4 -5 13 -5"/><circle cx="-5" cy="2" r="0.8"/><circle cx="5" cy="2" r="0.8"/><path d="M-4 8 Q0 10 4 8"/></g>
<g transform="translate(161 82) scale(1)"><ellipse rx="14" ry="9"/><ellipse cx="2" cy="1" rx="9" ry="6"/><path d="M-6 3 Q0 -4 6 -2"/><path d="M-12 -2 L-5 28"/></g>
<g transform="translate(225 82) rotate(10) scale(1)"><path d="M-15 -3 H15 Q14 14 0 14 Q-14 14 -15 -3 Z"/><path d="M-13 1 H13"/><path d="M6 -4 L14 -16"/></g>
<g transform="translate(285 82) rotate(0) scale(1)"><path d="M0 -22 Q5 -28 3 -18 L1 -14"/><path d="M-2 -14 L-2 10 M2 -14 L2 10"/><rect x="-7" y="10" width="14" height="12" rx="2"/></g>
<g transform="translate(-19 82) scale(1)"><circle r="15"/><path d="M-4 -12 Q5 -10 4 -3 Q-2 0 3 4 Q5 9 -3 11"/><circle cx="-8" cy="2" r="0.8"/></g>
<g transform="translate(333 82) scale(1)"><circle r="15"/><path d="M-4 -12 Q5 -10 4 -3 Q-2 0 3 4 Q5 9 -3 11"/><circle cx="-8" cy="2" r="0.8"/></g>
<g transform="translate(69 141) scale(1)"><ellipse cx="0" cy="10" rx="14" ry="9"/><ellipse cx="1" cy="9" rx="8" ry="5"/><path d="M8 6 L-4 -22"/></g>
<g transform="translate(169 141) rotate(0) scale(1)"><path d="M0 -22 Q5 -28 3 -18 L1 -14"/><path d="M-2 -14 L-2 10 M2 -14 L2 10"/><rect x="-7" y="10" width="14" height="12" rx="2"/></g>
<g transform="translate(246 141) rotate(35) scale(1)"><rect x="6" y="-7" width="14" height="13" rx="2"/><path d="M6 -2 H-18 Q-25 -2 -27 3 Q-20 4 -16 1"/><path d="M6 2 H-14"/></g>
<g transform="translate(-32 141) scale(1)"><path d="M-13 -2 Q-14 -16 0 -16 Q14 -16 13 -2 Q13 15 0 15 Q-13 15 -13 -2 Z"/><path d="M-13 -3 Q-6 -6 -2 -12 Q4 -5 13 -5"/><circle cx="-5" cy="2" r="0.8"/><circle cx="5" cy="2" r="0.8"/><path d="M-4 8 Q0 10 4 8"/></g>
<g transform="translate(320 141) scale(1)"><path d="M-13 -2 Q-14 -16 0 -16 Q14 -16 13 -2 Q13 15 0 15 Q-13 15 -13 -2 Z"/><path d="M-13 -3 Q-6 -6 -2 -12 Q4 -5 13 -5"/><circle cx="-5" cy="2" r="0.8"/><circle cx="5" cy="2" r="0.8"/><path d="M-4 8 Q0 10 4 8"/></g>
<path transform="translate(131 56) rotate(-20)" d="M-6 0 H6" stroke-width="3" stroke-linecap="round"/>
<path transform="translate(20 125) rotate(70)" d="M-6 0 H6" stroke-width="3" stroke-linecap="round"/>
<path transform="translate(372 125) rotate(70)" d="M-6 0 H6" stroke-width="3" stroke-linecap="round"/>
<path transform="translate(300 125) rotate(-60)" d="M-6 0 H6" stroke-width="3" stroke-linecap="round"/>
<path transform="translate(205 148) rotate(40)" d="M-6 0 H6" stroke-width="3" stroke-linecap="round"/>
<path transform="translate(120 176) rotate(20)" d="M-6 0 H6" stroke-width="3" stroke-linecap="round"/>
<path transform="translate(280 176) rotate(-30)" d="M-6 0 H6" stroke-width="3" stroke-linecap="round"/>
<circle cx="32" cy="67" r="1.7" fill="#e6e6e6" stroke="none"/>
<circle cx="384" cy="67" r="1.7" fill="#e6e6e6" stroke="none"/>
<circle cx="250" cy="50" r="1.7" fill="#e6e6e6" stroke="none"/>
<circle cx="120" cy="155" r="1.7" fill="#e6e6e6" stroke="none"/>
<circle cx="300" cy="170" r="1.7" fill="#e6e6e6" stroke="none"/>
<circle cx="10" cy="-26" r="1.7" fill="#e6e6e6" stroke="none"/>
<circle cx="10" cy="210" r="1.7" fill="#e6e6e6" stroke="none"/>
<circle cx="362" cy="-26" r="1.7" fill="#e6e6e6" stroke="none"/>
<circle cx="362" cy="210" r="1.7" fill="#e6e6e6" stroke="none"/>
<g transform="translate(112 200) rotate(-30) scale(1)"><rect x="6" y="-7" width="14" height="13" rx="2"/><path d="M6 -2 H-18 Q-25 -2 -27 3 Q-20 4 -16 1"/><path d="M6 2 H-14"/></g>
<g transform="translate(166 200) scale(1)"><path d="M-13 -2 Q-14 -16 0 -16 Q14 -16 13 -2 Q13 15 0 15 Q-13 15 -13 -2 Z"/><path d="M-13 -3 Q-6 -6 -2 -12 Q4 -5 13 -5"/><circle cx="-5" cy="2" r="0.8"/><circle cx="5" cy="2" r="0.8"/><path d="M-4 8 Q0 10 4 8"/></g>
<g transform="translate(221 200) scale(1)"><ellipse rx="14" ry="9"/><ellipse cx="2" cy="1" rx="9" ry="6"/><path d="M-6 3 Q0 -4 6 -2"/><path d="M-12 -2 L-5 28"/></g>
<g transform="translate(285 200) rotate(10) scale(1)"><path d="M-15 -3 H15 Q14 14 0 14 Q-14 14 -15 -3 Z"/><path d="M-13 1 H13"/><path d="M6 -4 L14 -16"/></g>
<g transform="translate(-7 200) rotate(0) scale(1)"><path d="M0 -22 Q5 -28 3 -18 L1 -14"/><path d="M-2 -14 L-2 10 M2 -14 L2 10"/><rect x="-7" y="10" width="14" height="12" rx="2"/></g>
<g transform="translate(345 200) rotate(0) scale(1)"><path d="M0 -22 Q5 -28 3 -18 L1 -14"/><path d="M-2 -14 L-2 10 M2 -14 L2 10"/><rect x="-7" y="10" width="14" height="12" rx="2"/></g>
<g transform="translate(41 200) scale(1)"><circle r="15"/><path d="M-4 -12 Q5 -10 4 -3 Q-2 0 3 4 Q5 9 -3 11"/><circle cx="-8" cy="2" r="0.8"/></g>
<g transform="translate(129 23) scale(1)"><ellipse cx="0" cy="10" rx="14" ry="9"/><ellipse cx="1" cy="9" rx="8" ry="5"/><path d="M8 6 L-4 -22"/></g>
<g transform="translate(129 259) scale(1)"><ellipse cx="0" cy="10" rx="14" ry="9"/><ellipse cx="1" cy="9" rx="8" ry="5"/><path d="M8 6 L-4 -22"/></g>
<g transform="translate(229 23) rotate(0) scale(1)"><path d="M0 -22 Q5 -28 3 -18 L1 -14"/><path d="M-2 -14 L-2 10 M2 -14 L2 10"/><rect x="-7" y="10" width="14" height="12" rx="2"/></g>
<g transform="translate(229 259) rotate(0) scale(1)"><path d="M0 -22 Q5 -28 3 -18 L1 -14"/><path d="M-2 -14 L-2 10 M2 -14 L2 10"/><rect x="-7" y="10" width="14" height="12" rx="2"/></g>
<g transform="translate(306 23) rotate(35) scale(1)"><rect x="6" y="-7" width="14" height="13" rx="2"/><path d="M6 -2 H-18 Q-25 -2 -27 3 Q-20 4 -16 1"/><path d="M6 2 H-14"/></g>
<g transform="translate(306 259) rotate(35) scale(1)"><rect x="6" y="-7" width="14" height="13" rx="2"/><path d="M6 -2 H-18 Q-25 -2 -27 3 Q-20 4 -16 1"/><path d="M6 2 H-14"/></g>
<g transform="translate(28 23) scale(1)"><path d="M-13 -2 Q-14 -16 0 -16 Q14 -16 13 -2 Q13 15 0 15 Q-13 15 -13 -2 Z"/><path d="M-13 -3 Q-6 -6 -2 -12 Q4 -5 13 -5"/><circle cx="-5" cy="2" r="0.8"/><circle cx="5" cy="2" r="0.8"/><path d="M-4 8 Q0 10 4 8"/></g>
<g transform="translate(28 259) scale(1)"><path d="M-13 -2 Q-14 -16 0 -16 Q14 -16 13 -2 Q13 15 0 15 Q-13 15 -13 -2 Z"/><path d="M-13 -3 Q-6 -6 -2 -12 Q4 -5 13 -5"/><circle cx="-5" cy="2" r="0.8"/><circle cx="5" cy="2" r="0.8"/><path d="M-4 8 Q0 10 4 8"/></g>
<g transform="translate(380 23) scale(1)"><path d="M-13 -2 Q-14 -16 0 -16 Q14 -16 13 -2 Q13 15 0 15 Q-13 15 -13 -2 Z"/><path d="M-13 -3 Q-6 -6 -2 -12 Q4 -5 13 -5"/><circle cx="-5" cy="2" r="0.8"/><circle cx="5" cy="2" r="0.8"/><path d="M-4 8 Q0 10 4 8"/></g>
<g transform="translate(380 259) scale(1)"><path d="M-13 -2 Q-14 -16 0 -16 Q14 -16 13 -2 Q13 15 0 15 Q-13 15 -13 -2 Z"/><path d="M-13 -3 Q-6 -6 -2 -12 Q4 -5 13 -5"/><circle cx="-5" cy="2" r="0.8"/><circle cx="5" cy="2" r="0.8"/><path d="M-4 8 Q0 10 4 8"/></g>
<path transform="translate(191 174) rotate(-20)" d="M-6 0 H6" stroke-width="3" stroke-linecap="round"/>
<path transform="translate(80 7) rotate(70)" d="M-6 0 H6" stroke-width="3" stroke-linecap="round"/>
<path transform="translate(80 243) rotate(70)" d="M-6 0 H6" stroke-width="3" stroke-linecap="round"/>
<path transform="translate(8 7) rotate(-60)" d="M-6 0 H6" stroke-width="3" stroke-linecap="round"/>
<path transform="translate(8 243) rotate(-60)" d="M-6 0 H6" stroke-width="3" stroke-linecap="round"/>
<path transform="translate(360 7) rotate(-60)" d="M-6 0 H6" stroke-width="3" stroke-linecap="round"/>
<path transform="translate(360 243) rotate(-60)" d="M-6 0 H6" stroke-width="3" stroke-linecap="round"/>
<path transform="translate(265 30) rotate(40)" d="M-6 0 H6" stroke-width="3" stroke-linecap="round"/>
<path transform="translate(265 266) rotate(40)" d="M-6 0 H6" stroke-width="3" stroke-linecap="round"/>
<path transform="translate(180 58) rotate(20)" d="M-6 0 H6" stroke-width="3" stroke-linecap="round"/>
<path transform="translate(-12 58) rotate(-30)" d="M-6 0 H6" stroke-width="3" stroke-linecap="round"/>
<path transform="translate(340 58) rotate(-30)" d="M-6 0 H6" stroke-width="3" stroke-linecap="round"/>
<circle cx="92" cy="185" r="1.7" fill="#e6e6e6" stroke="none"/>
<circle cx="310" cy="168" r="1.7" fill="#e6e6e6" stroke="none"/>
<circle cx="180" cy="37" r="1.7" fill="#e6e6e6" stroke="none"/>
<circle cx="8" cy="52" r="1.7" fill="#e6e6e6" stroke="none"/>
<circle cx="360" cy="52" r="1.7" fill="#e6e6e6" stroke="none"/>
<circle cx="70" cy="92" r="1.7" fill="#e6e6e6" stroke="none"/></g></pattern></defs><rect width="1359" height="716" fill="#fefefe"/><rect width="1359" height="716" fill="url(#dd)"/></svg>
<div class="a" style="left:791px;top:239px;width:914px;height:514px;border:1px solid #cdcbdc;background:transparent"></div>
<div class="a" style="left:791px;top:239px;width:914px;height:514px">
 <svg class="a" style="left:0;top:0" width="914" height="514">
  <defs>
   <linearGradient id="mfm" x1="0" y1="0" x2="0" y2="1"><stop offset="0" stop-color="#0a4af6"/><stop offset="1" stop-color="#4f82f2"/></linearGradient>
   <linearGradient id="mnm" x1="0" y1="0" x2="0" y2="1"><stop offset="0" stop-color="#5a8ef6"/><stop offset="1" stop-color="#aac6fb"/></linearGradient>
   <linearGradient id="mbm" x1="0" y1="0" x2="0" y2="1"><stop offset="0" stop-color="#9dbcf8"/><stop offset="1" stop-color="#e2ecfd"/></linearGradient>
  </defs>
  <rect x="30.3" y="37.3" width="394.5" height="235.2" fill="url(#mfm)" stroke="#1b2b55" stroke-width="1.2"/>
  <rect x="41" y="48.8" width="373" height="213" fill="#fff" stroke="#222a44" stroke-width="1.2"/>
  <rect x="193.5" y="272.5" width="68.5" height="59" fill="url(#mnm)" stroke="#1f2a45" stroke-width="1.2"/>
  <rect x="145" y="331.5" width="164.5" height="14.8" fill="url(#mbm)" stroke="#1f2a45" stroke-width="1.2"/>
  <g transform="translate(69,179) scale(0.08363)" fill="none" stroke="#1e1e1e" stroke-width="30" stroke-linecap="round" stroke-linejoin="round">
   <path d="M110 140 Q110 95 165 95 L500 95 Q640 100 700 220 Q730 320 680 345 L280 345 Q120 300 105 160 Z"/>
   <path d="M210 330 L210 620 Q215 830 430 835 Q650 830 655 620 L655 345"/>
   <path d="M210 400 Q120 400 120 480 Q125 560 210 565 M655 400 Q740 400 740 480 Q735 560 655 565"/>
   <path d="M375 680 Q440 712 500 680"/>
  </g>
  <g transform="translate(69,179) scale(0.08363)" fill="#1e1e1e"><circle cx="333" cy="492" r="20"/><circle cx="533" cy="492" r="20"/></g>
  <g transform="translate(311,179) scale(0.08363)" fill="none" stroke="#1e1e1e" stroke-width="30" stroke-linecap="round" stroke-linejoin="round">
   <path d="M110 780 L110 390 Q130 100 435 95 Q740 100 760 390 L760 780 Q435 880 110 780 Z"/>
   <path d="M240 560 L240 390 L510 390 Q620 390 630 295 L630 560"/>
   <path d="M240 470 Q245 745 435 748 Q625 745 630 470"/>
   <path d="M240 425 Q165 425 165 495 Q170 565 240 565 M630 425 Q705 425 705 495 Q700 565 630 565"/>
   <circle cx="345" cy="497" r="55"/><circle cx="525" cy="497" r="55"/><path d="M400 497 L470 497 M290 480 L245 420"/>
  </g>
  <g transform="translate(311,179) scale(0.08363)" fill="#1e1e1e"><path d="M390 625 Q435 655 480 625 Q435 612 390 625 Z"/></g>
  <rect x="453.5" y="172.8" width="447" height="77.3" fill="#fff" stroke="#dcdcdc" stroke-width="1"/>
  <rect x="467" y="186.5" width="420.3" height="50.4" fill="#fff" stroke="#ececec" stroke-width="1"/>
  <path d="M606.8 186.5 V237 M746.9 186.5 V237" stroke="#ececec" stroke-width="1"/>
  <circle cx="538" cy="201.2" r="5.8" fill="#f2f2f2" stroke="#333" stroke-width="1.3"/>
  <path d="M530 216 Q538 207 546 216 L546 222 Q538 229 530 222 Z" fill="#e4231f" stroke="#222" stroke-width="1"/>
  <rect x="662.6" y="196" width="29.3" height="29.3" fill="#fff" stroke="#333" stroke-width="2.2"/>
  <g stroke="#555" stroke-width="1.2"><path d="M677 201 V206 M677 215 V220 M667 210.7 H672 M682 210.7 H687 M670 203.8 L673.5 207.2 M680.5 214.2 L684 217.6 M684 203.8 L680.5 207.2 M673.5 214.2 L670 217.6"/></g>
  <circle cx="677" cy="210.7" r="4.8" fill="#f7d000" stroke="#333" stroke-width="1"/>
  <circle cx="822" cy="201.5" r="6.5" fill="#f4f4f4" stroke="#333" stroke-width="1.3"/>
  <path d="M807 201 l1.6 3.3 3.6 0.5 -2.6 2.5 0.6 3.6 -3.2 -1.7 -3.2 1.7 0.6 -3.6 -2.6 -2.5 3.6 -0.5z" fill="#f3e23a" stroke="#555" stroke-width="0.8"/>
  <path d="M817 209 L826 211 L831 222 L827 222 L825 226 L820 226 L818 216 L810 219" fill="#111" stroke="#111" stroke-width="2"/>
  <circle cx="809" cy="219" r="2" fill="#777"/>
  <circle cx="862.8" cy="465.2" r="22.1" fill="#8b7355"/>
  <ellipse cx="856" cy="468.2" rx="21.3" ry="22.3" fill="none" stroke="#1a1410" stroke-width="2"/>
  <path d="M857.6 468.8 H892.5 M886.5 463 L893 468.8 L886.5 474.5" fill="none" stroke="#1a1410" stroke-width="2"/>
 </svg>
 <div class="a" style="left:92.5px;top:60px;font-size:37px;letter-spacing:1.1px;color:#111;white-space:nowrap;line-height:50px;-webkit-text-stroke:0.6px #fff">Mi día favorito</div>
 <div class="a" style="left:126.5px;top:128px;font-size:27.8px;color:#111;white-space:nowrap;line-height:34px;-webkit-text-stroke:0.7px #fff">Cuento digital</div>
 <div class="a" style="left:529px;top:1.4px;font-size:64px;color:#111;white-space:nowrap;line-height:72px;-webkit-text-stroke:1.2px #fdfdfd;transform:scaleX(0.945);transform-origin:0 0">"Mi día<br>favorito"</div>
 <div class="a" style="left:529.5px;top:284.2px;font-size:64px;color:#111;white-space:nowrap;line-height:69.6px;-webkit-text-stroke:1.2px #fdfdfd;transform:scaleX(0.945);transform-origin:0 0">Creamos un<br>cuento<br>digital</div>
</div>
<!-- genially watermark -->
<div class="a" style="left:805.8px;top:694.3px;width:44.2px;height:44.2px;border-radius:50%;background:conic-gradient(from 0deg,#f6a23e,#f4577a 60deg,#c057d8 120deg,#7a6cf0 160deg,#45a6f5 190deg,#4ee0b0 240deg,#8ee86a 280deg,#d9e84a 320deg,#f6a23e)"></div>
<div class="a" style="left:810.9px;top:699.4px;width:34px;height:34px;border-radius:50%;background:#111"></div>
<svg class="a" style="left:805.8px;top:694.3px" width="45" height="45"><path d="M26.5 9.8 A11.8 11.8 0 1 0 33.6 26.2" fill="none" stroke="#fff" stroke-width="4.6" stroke-linecap="round"/><circle cx="25.2" cy="24.1" r="2.8" fill="#fff"/></svg>
<div class="a" style="left:862.5px;top:691.5px;font-size:10px;font-weight:700;font-style:italic;color:#222;white-space:nowrap;letter-spacing:0.1px">Powered by</div>
<div class="a" style="left:860.5px;top:700.5px;font-size:27px;color:#1e1e1e;white-space:nowrap;letter-spacing:0.35px;-webkit-text-stroke:0.5px #1e1e1e">genially</div>
<!-- rulers -->
<div class="a" style="left:551px;top:157px;width:36px;height:79px;background:#fff"></div><div class="a" style="left:587px;top:157px;width:1323px;height:34px;background:linear-gradient(180deg,rgba(0,0,0,.07),rgba(0,0,0,0) 4px),#fff;box-shadow:0 2px 3px rgba(0,0,0,.10);border-left:1px solid #e8e8e8"></div>
<svg class="a" style="left:587px;top:157px" width="1323" height="34"><path d="M204.0 0 V34" stroke="#d6d6d6" stroke-width="1"/>
<text x="211.0" y="14.5" font-size="12.5" fill="#6e6e78" font-family="Liberation Sans">0</text>
<path d="M223.0 28 V34" stroke="#cfcfcf" stroke-width="1"/>
<path d="M242.1 22 V34" stroke="#cfcfcf" stroke-width="1"/>
<path d="M261.1 28 V34" stroke="#cfcfcf" stroke-width="1"/>
<path d="M280.2 0 V34" stroke="#d6d6d6" stroke-width="1"/>
<text x="287.2" y="14.5" font-size="12.5" fill="#6e6e78" font-family="Liberation Sans">100</text>
<path d="M299.2 28 V34" stroke="#cfcfcf" stroke-width="1"/>
<path d="M318.2 22 V34" stroke="#cfcfcf" stroke-width="1"/>
<path d="M337.3 28 V34" stroke="#cfcfcf" stroke-width="1"/>
<path d="M356.3 0 V34" stroke="#d6d6d6" stroke-width="1"/>
<text x="363.3" y="14.5" font-size="12.5" fill="#6e6e78" font-family="Liberation Sans">200</text>
<path d="M375.4 28 V34" stroke="#cfcfcf" stroke-width="1"/>
<path d="M394.4 22 V34" stroke="#cfcfcf" stroke-width="1"/>
<path d="M413.5 28 V34" stroke="#cfcfcf" stroke-width="1"/>
<path d="M432.5 0 V34" stroke="#d6d6d6" stroke-width="1"/>
<text x="439.5" y="14.5" font-size="12.5" fill="#6e6e78" font-family="Liberation Sans">300</text>
<path d="M451.5 28 V34" stroke="#cfcfcf" stroke-width="1"/>
<path d="M470.6 22 V34" stroke="#cfcfcf" stroke-width="1"/>
<path d="M489.6 28 V34" stroke="#cfcfcf" stroke-width="1"/>
<path d="M508.7 0 V34" stroke="#d6d6d6" stroke-width="1"/>
<text x="515.7" y="14.5" font-size="12.5" fill="#6e6e78" font-family="Liberation Sans">400</text>
<path d="M527.7 28 V34" stroke="#cfcfcf" stroke-width="1"/>
<path d="M546.8 22 V34" stroke="#cfcfcf" stroke-width="1"/>
<path d="M565.8 28 V34" stroke="#cfcfcf" stroke-width="1"/>
<path d="M584.8 0 V34" stroke="#d6d6d6" stroke-width="1"/>
<text x="591.8" y="14.5" font-size="12.5" fill="#6e6e78" font-family="Liberation Sans">500</text>
<path d="M603.9 28 V34" stroke="#cfcfcf" stroke-width="1"/>
<path d="M622.9 22 V34" stroke="#cfcfcf" stroke-width="1"/>
<path d="M642.0 28 V34" stroke="#cfcfcf" stroke-width="1"/>
<path d="M661.0 0 V34" stroke="#d6d6d6" stroke-width="1"/>
<text x="668.0" y="14.5" font-size="12.5" fill="#6e6e78" font-family="Liberation Sans">600</text>
<path d="M680.0 28 V34" stroke="#cfcfcf" stroke-width="1"/>
<path d="M699.1 22 V34" stroke="#cfcfcf" stroke-width="1"/>
<path d="M718.1 28 V34" stroke="#cfcfcf" stroke-width="1"/>
<path d="M737.2 0 V34" stroke="#d6d6d6" stroke-width="1"/>
<text x="744.2" y="14.5" font-size="12.5" fill="#6e6e78" font-family="Liberation Sans">700</text>
<path d="M756.2 28 V34" stroke="#cfcfcf" stroke-width="1"/>
<path d="M775.2 22 V34" stroke="#cfcfcf" stroke-width="1"/>
<path d="M794.3 28 V34" stroke="#cfcfcf" stroke-width="1"/>
<path d="M813.3 0 V34" stroke="#d6d6d6" stroke-width="1"/>
<text x="820.3" y="14.5" font-size="12.5" fill="#6e6e78" font-family="Liberation Sans">800</text>
<path d="M832.4 28 V34" stroke="#cfcfcf" stroke-width="1"/>
<path d="M851.4 22 V34" stroke="#cfcfcf" stroke-width="1"/>
<path d="M870.5 28 V34" stroke="#cfcfcf" stroke-width="1"/>
<path d="M889.5 0 V34" stroke="#d6d6d6" stroke-width="1"/>
<text x="896.5" y="14.5" font-size="12.5" fill="#6e6e78" font-family="Liberation Sans">900</text>
<path d="M908.5 28 V34" stroke="#cfcfcf" stroke-width="1"/>
<path d="M927.6 22 V34" stroke="#cfcfcf" stroke-width="1"/>
<path d="M946.6 28 V34" stroke="#cfcfcf" stroke-width="1"/>
<path d="M965.7 0 V34" stroke="#d6d6d6" stroke-width="1"/>
<text x="972.7" y="14.5" font-size="12.5" fill="#6e6e78" font-family="Liberation Sans">1000</text>
<path d="M984.7 28 V34" stroke="#cfcfcf" stroke-width="1"/>
<path d="M1003.8 22 V34" stroke="#cfcfcf" stroke-width="1"/>
<path d="M1022.8 28 V34" stroke="#cfcfcf" stroke-width="1"/>
<path d="M1041.8 0 V34" stroke="#d6d6d6" stroke-width="1"/>
<text x="1048.8" y="14.5" font-size="12.5" fill="#6e6e78" font-family="Liberation Sans">1100</text>
<path d="M1060.9 28 V34" stroke="#cfcfcf" stroke-width="1"/>
<path d="M1079.9 22 V34" stroke="#cfcfcf" stroke-width="1"/>
<path d="M1099.0 28 V34" stroke="#cfcfcf" stroke-width="1"/>
<path d="M1118.0 0 V34" stroke="#d6d6d6" stroke-width="1"/><path d="M1322.5 0 V34" stroke="#ddd"/></svg>
<div class="a" style="left:551px;top:191px;width:36px;height:682px;background:#fff;box-shadow:2px 0 3px rgba(0,0,0,.08)"></div>
<svg class="a" style="left:551px;top:236px" width="36" height="637"><path d="M0 3.2 H36" stroke="#d6d6d6" stroke-width="1"/>
<text transform="translate(17 33.2) rotate(-90)" font-size="12.5" fill="#6e6e78" font-family="Liberation Sans">0</text>
<path d="M30.5 22.2 H36" stroke="#cfcfcf" stroke-width="1"/>
<path d="M25 41.3 H36" stroke="#cfcfcf" stroke-width="1"/>
<path d="M30.5 60.3 H36" stroke="#cfcfcf" stroke-width="1"/>
<path d="M0 79.4 H36" stroke="#d6d6d6" stroke-width="1"/>
<text transform="translate(17 109.4) rotate(-90)" font-size="12.5" fill="#6e6e78" font-family="Liberation Sans">100</text>
<path d="M30.5 98.4 H36" stroke="#cfcfcf" stroke-width="1"/>
<path d="M25 117.4 H36" stroke="#cfcfcf" stroke-width="1"/>
<path d="M30.5 136.5 H36" stroke="#cfcfcf" stroke-width="1"/>
<path d="M0 155.5 H36" stroke="#d6d6d6" stroke-width="1"/>
<text transform="translate(17 185.5) rotate(-90)" font-size="12.5" fill="#6e6e78" font-family="Liberation Sans">200</text>
<path d="M30.5 174.6 H36" stroke="#cfcfcf" stroke-width="1"/>
<path d="M25 193.6 H36" stroke="#cfcfcf" stroke-width="1"/>
<path d="M30.5 212.7 H36" stroke="#cfcfcf" stroke-width="1"/>
<path d="M0 231.7 H36" stroke="#d6d6d6" stroke-width="1"/>
<text transform="translate(17 261.7) rotate(-90)" font-size="12.5" fill="#6e6e78" font-family="Liberation Sans">300</text>
<path d="M30.5 250.7 H36" stroke="#cfcfcf" stroke-width="1"/>
<path d="M25 269.8 H36" stroke="#cfcfcf" stroke-width="1"/>
<path d="M30.5 288.8 H36" stroke="#cfcfcf" stroke-width="1"/>
<path d="M0 307.9 H36" stroke="#d6d6d6" stroke-width="1"/>
<text transform="translate(17 337.9) rotate(-90)" font-size="12.5" fill="#6e6e78" font-family="Liberation Sans">400</text>
<path d="M30.5 326.9 H36" stroke="#cfcfcf" stroke-width="1"/>
<path d="M25 345.9 H36" stroke="#cfcfcf" stroke-width="1"/>
<path d="M30.5 365.0 H36" stroke="#cfcfcf" stroke-width="1"/>
<path d="M0 384.0 H36" stroke="#d6d6d6" stroke-width="1"/>
<text transform="translate(17 414.0) rotate(-90)" font-size="12.5" fill="#6e6e78" font-family="Liberation Sans">500</text>
<path d="M30.5 403.1 H36" stroke="#cfcfcf" stroke-width="1"/>
<path d="M25 422.1 H36" stroke="#cfcfcf" stroke-width="1"/>
<path d="M30.5 441.2 H36" stroke="#cfcfcf" stroke-width="1"/>
<path d="M0 460.2 H36" stroke="#d6d6d6" stroke-width="1"/>
<text transform="translate(17 490.2) rotate(-90)" font-size="12.5" fill="#6e6e78" font-family="Liberation Sans">600</text>
<path d="M30.5 479.2 H36" stroke="#cfcfcf" stroke-width="1"/>
<path d="M25 498.3 H36" stroke="#cfcfcf" stroke-width="1"/>
<path d="M30.5 517.3 H36" stroke="#cfcfcf" stroke-width="1"/>
<path d="M35.5 0 V637" stroke="#e4e4e4"/></svg>
<div class="a" style="left:551px;top:191px;width:36px;height:45px;background:#fff"></div>
<svg class="a" style="left:551px;top:157px" width="36" height="44"><path d="M0 0 H31 V24 Q31 29 26 30.5 L0 40 Z" fill="#6c2bf6"/><path d="M0 40 L26 30.5" stroke="rgba(108,43,246,.25)" stroke-width="3"/>
 <g transform="translate(15.5 17) rotate(40)"><path d="M-4 -8 H4 L3 -1 L6 3 H-6 L-3 -1 Z" fill="#fff"/><path d="M0 3 V10" stroke="#fff" stroke-width="2"/></g></svg>

<div class="a" style="left:551px;top:157px;width:5px;height:716px;background:linear-gradient(90deg,rgba(0,0,0,.09),rgba(0,0,0,0))"></div>
<!-- bottom toolbar -->
<div class="a" style="left:805px;top:790.5px;width:264px;height:58.5px;border-radius:13px;background:#fff;box-shadow:0 1px 5px rgba(0,0,0,.13)"></div>
<div class="a" style="left:1082px;top:790.5px;width:191px;height:58.5px;border-radius:13px;background:#fff;box-shadow:0 1px 5px rgba(0,0,0,.13)"></div>
<div class="a" style="left:1285.5px;top:790.5px;width:164.5px;height:58.5px;border-radius:13px;background:#fff;box-shadow:0 1px 5px rgba(0,0,0,.13)"></div>
<div class="a" style="left:1463px;top:790.5px;width:181.5px;height:58.5px;border-radius:13px;background:#fff;box-shadow:0 1px 5px rgba(0,0,0,.13)"></div>
<svg class="a" style="left:800px;top:785px" width="860" height="70">
 <g transform="translate(-800,-785)">
 <circle cx="828" cy="819.8" r="12.4" fill="#131313"/>
 <path d="M828 813 V826.6 M821.2 819.8 H834.8" stroke="#fff" stroke-width="2.8"/>
 <rect x="1008.5" y="795.5" width="1" height="48" fill="#dcdcdc"/>
 <g fill="#30303a"><rect x="1027.5" y="810" width="24" height="3.2" rx="1.2"/><rect x="1035" y="807" width="9" height="4" rx="1.5"/><path d="M1029.5 815 H1049.5 L1048 830 Q1047.7 832.5 1045 832.5 H1034 Q1031.3 832.5 1031 830 Z"/></g>
 <g fill="none" stroke="#30303a" stroke-width="3"><circle cx="1109" cy="818.5" r="8.5"/><path d="M1115.5 825 L1122 831.5" stroke-linecap="round"/><path d="M1104.5 818.5 H1113.5"/></g>
 <g fill="none" stroke="#30303a" stroke-width="3"><circle cx="1241" cy="818.5" r="8.5"/><path d="M1247.5 825 L1254 831.5" stroke-linecap="round"/><path d="M1236.5 818.5 H1245.5 M1241 814 V823"/></g>
 <path d="M1308.7 820.2 L1320.4 812.7 V827.7 Z" fill="#c8c8d2"/>
 <rect x="1345.5" y="796" width="1" height="47" fill="#dcdcdc"/>
 <rect x="1389.5" y="796" width="1" height="47" fill="#dcdcdc"/>
 <path d="M1427.2 820.2 L1415.5 812.7 V827.7 Z" fill="#131313"/>
 <g fill="#30303a"><path d="M1481 814 l2.2 2.3 4.2 -4.6" stroke="#30303a" stroke-width="2.2" fill="none"/><path d="M1481 821 l2.2 2.3 4.2 -4.6" stroke="#30303a" stroke-width="2.2" fill="none"/><circle cx="1483" cy="829" r="1.6"/><rect x="1490" y="811.5" width="13.5" height="2.6" rx="1.2"/><rect x="1490" y="819" width="13.5" height="2.6" rx="1.2"/><rect x="1487.5" y="827.7" width="16" height="2.6" rx="1.2"/></g>
 <rect x="1522.3" y="797" width="1" height="46" fill="#dcdcdc"/>
 <g fill="#30303a"><rect x="1541.5" y="809.5" width="3" height="3"/><rect x="1562.5" y="809.5" width="3" height="3"/><rect x="1541.5" y="827.5" width="3" height="3"/><rect x="1562.5" y="827.5" width="3" height="3"/><rect x="1541.5" y="818.5" width="3" height="3"/><rect x="1562.5" y="818.5" width="3" height="3"/><rect x="1550" y="809.5" width="7" height="3"/><rect x="1550" y="827.5" width="7" height="3"/></g>
 <rect x="1546.5" y="814.5" width="14" height="11" fill="none" stroke="#30303a" stroke-width="2.6"/>
 <rect x="1583.7" y="797" width="1" height="46" fill="#dcdcdc"/>
 <rect x="1602.2" y="809.4" width="10.4" height="20.7" rx="1.5" fill="#30303a"/><rect x="1616.2" y="809.4" width="10.1" height="20.7" rx="1.5" fill="#30303a"/>
 <path d="M1608.5 816.5 L1605.5 819.8 L1608.5 823 M1620 816.5 L1623 819.8 L1620 823" stroke="#fff" stroke-width="1.5" fill="none"/>
 </g>
</svg>
<div class="a" style="left:853px;top:806px;font-size:23px;color:#30303a;white-space:nowrap">Añadir página</div>
<div class="a" style="left:1149.5px;top:807px;font-size:21.5px;color:#30303a;white-space:nowrap">100%</div>
<div class="a" style="left:1362.5px;top:807px;font-size:21.5px;color:#30303a;white-space:nowrap">1</div>
<!-- toggle -->
<div class="a" style="left:1760px;top:790.8px;width:113.5px;height:57.8px;border-radius:29px;background:#131313"></div>
<div class="a" style="left:1754.7px;top:789.6px;width:60.2px;height:60.2px;border-radius:50%;background:#fff;box-shadow:0 1px 5px rgba(0,0,0,.25)"></div>
<svg class="a" style="left:1750px;top:785px" width="130" height="70">
 <g transform="translate(-1750,-785)">
 <path d="M1775 829.5 L1776.2 823.5 L1790.5 809.2 Q1792.5 807.3 1794.5 809.2 L1795.8 810.5 Q1797.7 812.5 1795.8 814.5 L1781.5 828.8 Z" fill="#131313"/>
 <path d="M1789 812 L1793 816" stroke="#fff" stroke-width="1.2"/>
 <path d="M1830 819.7 Q1842.6 806 1855.2 819.7 Q1842.6 833.4 1830 819.7 Z" fill="#fff"/>
 <circle cx="1842.6" cy="819.7" r="4.6" fill="#131313"/>
 </g>
</svg>
<!-- right side tab -->
<svg class="a" style="left:1860px;top:428px" width="50" height="166">
 <defs><filter id="tsh" x="-50%" y="-20%" width="200%" height="140%"><feDropShadow dx="0" dy="0" stdDeviation="1.2" flood-color="#000" flood-opacity=".18"/></filter></defs>
 <path d="M52 2 C52 20 17 26 17 48 V130 C17 150 52 146 52 162 Z" fill="#fff" filter="url(#tsh)"/>
 <g fill="#5a5a62"><circle cx="33.7" cy="79.2" r="2.7"/><circle cx="33.7" cy="87.6" r="2.7"/><circle cx="33.7" cy="96.1" r="2.7"/></g>
</svg>
<!-- windows watermark -->
<div class="a" style="left:1433px;top:761px;font-size:26px;color:rgba(120,120,120,.62);white-space:nowrap;letter-spacing:1.65px">Activar Windows</div>
<div class="a" style="left:1433px;top:801px;font-size:19.5px;color:rgba(120,120,120,.55);white-space:nowrap;letter-spacing:0.8px">Ve a Configuración para activar Windows.</div>
<div id="task" class="a" style="background:linear-gradient(90deg,#3a302a 0%,#3b312b 55%,#2f2c30 64%,#2b303c 69.5%,#3a3531 76%,#463b33 86%,#3f352f 94%,#2e2825 100%)"></div>
<div class="a" style="left:0;top:873px;width:62px;height:60px;background:#3e342e"></div>
<div class="a" style="left:62px;top:873px;width:516px;height:60px;background:#f0f0f0;border:1.5px solid #c4c4c4;border-bottom:none"></div>
<div class="a" style="left:123px;top:892.5px;font-size:22.5px;color:#333;white-space:nowrap;line-height:26px">Escribe aquí para buscar</div>
<svg class="a" style="left:0;top:873px" width="1910" height="60">
 <g transform="translate(0,-873)">
 <path d="M13.8 892.5 L24.5 891 V902.2 H13.8 Z M25.7 890.8 L38.4 889 V902.2 H25.7 Z M13.8 903.4 H24.5 V914.4 L13.8 913 Z M25.7 903.4 H38.4 V916.2 L25.7 914.6 Z" fill="#fff"/>
 <circle cx="96" cy="899" r="7.3" fill="none" stroke="#1a1a1a" stroke-width="1.8"/>
 <path d="M90.8 904.2 L80.5 914.5" stroke="#1a1a1a" stroke-width="1.8"/>
 <g fill="none" stroke="#fff" stroke-width="1.6"><rect x="604" y="895" width="14" height="14"/><path d="M602 891 H620 M602 913 H620 M625 890.5 V894 M625 896.5 V908 M625 910.5 V914"/></g>
 <path d="M674 890 H687 L690 893.5 H707.5 V916 H674 Z" fill="#f2b531"/>
 <path d="M674 897 H707.5 V916 H674 Z" fill="#f8d264"/>
 <path d="M683 916 V906 H699 V916 H695 V910 H687 V916 Z" fill="#2f7fd8"/>
 <rect x="660.7" y="930" width="61.3" height="3" fill="#76b9ed"/>
 <circle cx="765.8" cy="903" r="18" fill="#7d6ac2"/>
 <path d="M776 892 A14 14 0 1 0 777 914 M772 896 A9.5 9.5 0 1 0 773 910 M768.5 900 A4.5 4.5 0 1 0 769 906" stroke="#e8e2f8" stroke-width="2.3" fill="none"/>
 <g transform="translate(840.7,903)">
  <circle r="18" fill="#db4437"/>
  <path d="M0 0 L-15.6 -9 A18 18 0 0 0 -9 15.6 Z" fill="#0f9d58"/>
  <path d="M0 0 L-9 15.6 A18 18 0 0 0 18 0 L15.6 -9 Z" fill="#f4b400"/>
  <path d="M0 0 L15.6 -9 A18 18 0 0 0 -15.6 -9 Z" fill="#db4437"/>
  <circle r="8.3" fill="#fff"/><circle r="6.6" fill="#4285f4"/>
 </g>
 <g transform="translate(915.5,903)">
  <circle r="18" fill="#1d8fd6"/>
  <path d="M-18 2 A18 18 0 0 1 17.5 -4 Q18 6 8 8 Q0 9 -1 3 Q-2 -5 8 -6 Q0 -14 -10 -8 Q-17 -3 -18 2 Z" fill="#4fd17e" opacity=".85"/>
  <path d="M-3 4 Q-3 12 6 12 Q12 12 17 8 A18 18 0 0 1 -18 2 Q-14 -6 -5 -7 Q-3 -2 -3 4 Z" fill="#1463b8"/>
 </g>
 <rect x="955.3" y="873" width="66.2" height="60" fill="#5b524c" opacity=".75"/>
 <g transform="translate(991,903)">
  <path d="M0 0 L-15.6 -9 A18 18 0 0 0 -9 15.6 Z" fill="#0f9d58"/>
  <path d="M0 0 L-9 15.6 A18 18 0 0 0 18 0 L15.6 -9 Z" fill="#f4b400"/>
  <path d="M0 0 L15.6 -9 A18 18 0 0 0 -15.6 -9 Z" fill="#db4437"/>
  <circle r="8.3" fill="#fff"/><circle r="6.6" fill="#4285f4"/>
 </g>
 <circle cx="1002" cy="915" r="11" fill="#5f6358"/>
 <ellipse cx="1002" cy="915" rx="5" ry="8" fill="#b8a898" opacity=".7"/>
 <rect x="955.3" y="930" width="71" height="3" fill="#76b9ed"/>
 <rect x="1022" y="873" width="3" height="60" fill="#2a2420"/>
 <path d="M1062 889.6 H1088.3 V915.5 H1062 Z" fill="#fff"/>
 <path d="M1068 891.5 H1086 V913.5 H1068 Z" fill="#2b579a"/>
 <g stroke="#fff" stroke-width="1.5"><path d="M1076 896 H1084 M1076 900 H1084 M1076 904 H1084 M1076 908 H1084"/></g>
 <path d="M1056.6 893.5 L1075 890.5 V914.5 L1056.6 911.5 Z" fill="#2b579a"/>
 <text x="1058.5" y="908.5" font-size="14" font-weight="700" fill="#fff" font-family="Liberation Sans">W</text>
 <rect x="1043.6" y="930" width="61.4" height="3" fill="#76b9ed"/>
 <g fill="none" stroke="#fff" stroke-width="1.8"><rect x="1542.5" y="892" width="30" height="22" rx="1.5"/><path d="M1572.5 896 H1577.5 V913 Q1577.5 914.5 1575 914.5"/><rect x="1547.5" y="898" width="9" height="9"/><path d="M1560 898 H1568 M1560 902.5 H1568 M1560 907 H1568 M1547 910.5 H1568"/></g>
 <path d="M1616.5 908 L1626 898 L1635.5 908" stroke="#fff" stroke-width="1.6" fill="none"/>
 <circle cx="1662" cy="902.8" r="12" fill="#1b4b8a"/>
 <circle cx="1662" cy="902.8" r="12" fill="url(#stg)"/>
 <defs><linearGradient id="stg" x1="0" y1="0" x2="0" y2="1"><stop offset="0" stop-color="#2f7ec9"/><stop offset="1" stop-color="#0c2a5a"/></linearGradient></defs>
 <circle cx="1665.5" cy="899.3" r="4.2" fill="none" stroke="#fff" stroke-width="2"/><circle cx="1665.5" cy="899.3" r="1.8" fill="#fff"/>
 <path d="M1650.5 904 L1657.5 907" stroke="#fff" stroke-width="2.6"/><path d="M1658.5 905.5 L1663.5 901.5" stroke="#fff" stroke-width="2.2"/><circle cx="1657.5" cy="907" r="3.2" fill="#fff"/><circle cx="1657.5" cy="907" r="1.5" fill="#1b4b8a"/>
 <rect x="1688" y="897.5" width="20" height="12.5" fill="none" stroke="#fff" stroke-width="1.5"/>
 <rect x="1708" y="901" width="2" height="5.5" fill="#fff"/>
 <rect x="1690" y="899.5" width="8" height="8.5" fill="#fff"/>
 <path d="M1847.5 891.5 H1872.5 V909.5 H1860 L1853 916 V909.5 H1847.5 Z" fill="#fff"/>
 <path d="M1851.5 896 H1868.5 M1851.5 900 H1868.5 M1851.5 904 H1864" stroke="#333" stroke-width="1.3"/>
 <circle cx="1871" cy="913.8" r="10.3" fill="#3a302a" stroke="#ddd" stroke-width="1.5"/>
 <text x="1866.5" y="919.5" font-size="14" font-weight="700" fill="#fff" font-family="Liberation Sans">1</text>
 <rect x="1902.5" y="873" width="1.2" height="60" fill="#8a8580"/>
 </g>
</svg>
<div class="a" style="left:1751px;top:879px;font-size:18px;color:#fff;white-space:nowrap">12:54</div>
<div class="a" style="left:1726px;top:906px;font-size:18.5px;color:#fff;white-space:nowrap">06/06/2025</div>

</body></html>
